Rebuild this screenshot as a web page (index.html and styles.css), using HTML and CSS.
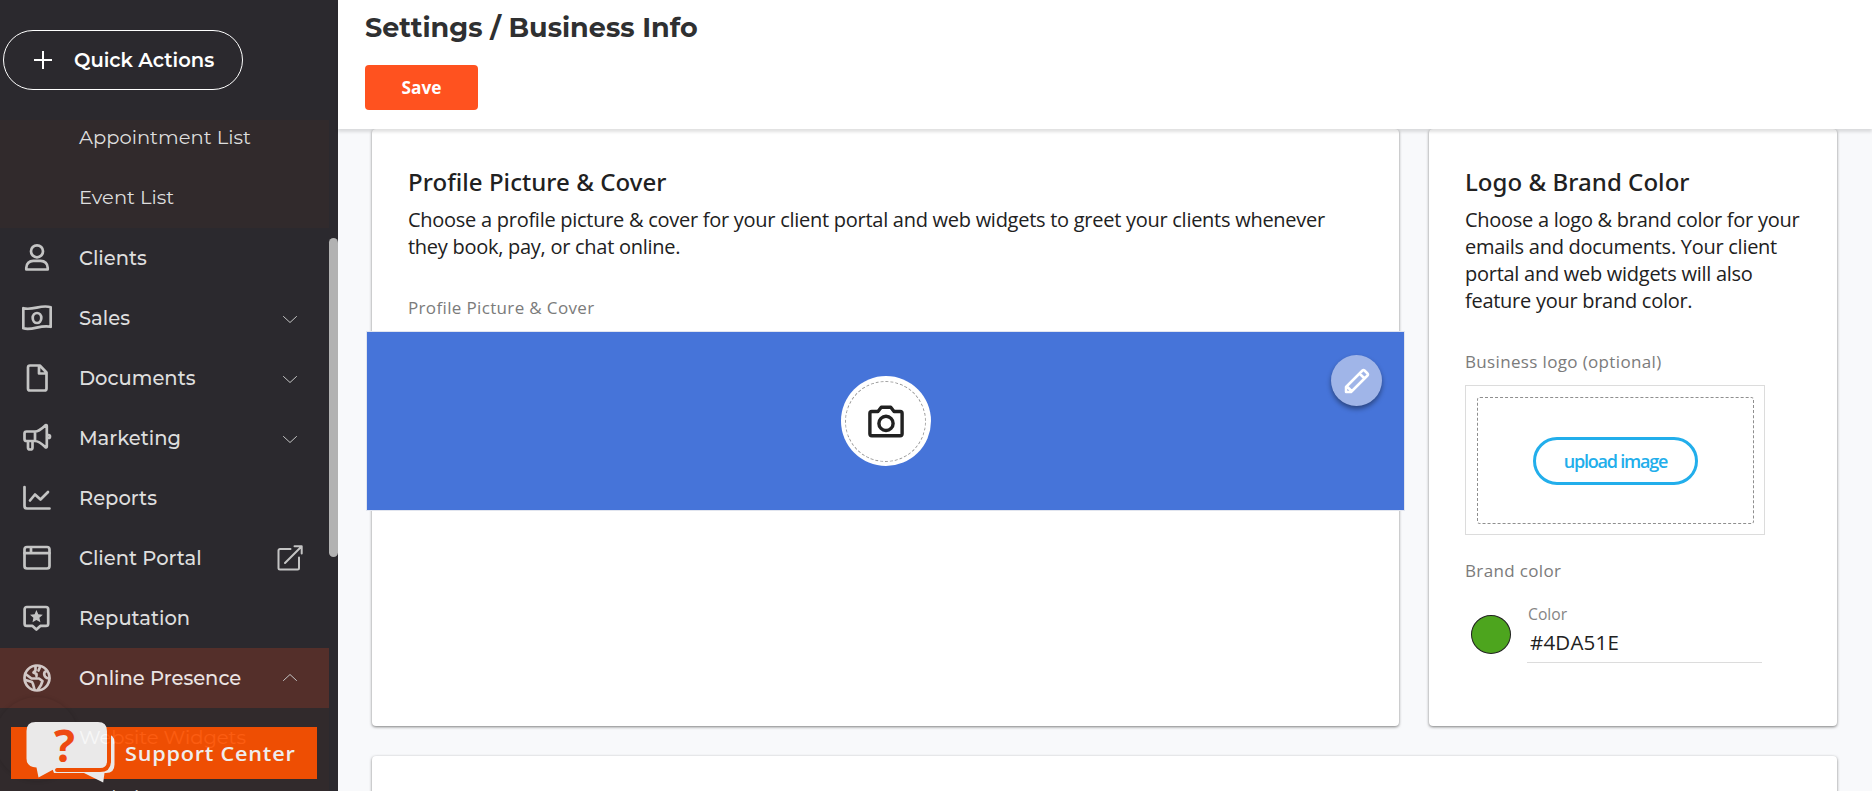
FILE: index.html
```
<!DOCTYPE html>
<html lang="en">
<head>
    <meta charset="UTF-8">
    <meta name="viewport" content="width=device-width, initial-scale=1.0">
    <title>Settings / Business Info</title>
    <link rel="stylesheet" href="styles.css">
</head>
<body>
    <aside class="sidebar">
        <button class="quick-actions">
            <svg class="plus" viewBox="0 0 18 18"><path d="M9 0v18M0 9h18"/></svg>
            <span>Quick Actions</span>
        </button>
        <div class="nav-scroll">
            <nav class="nav">
                <div class="submenu submenu-top">
                    <a class="sub-item">Appointment List</a>
                    <a class="sub-item">Event List</a>
                </div>
                <a class="nav-item">
                    <svg class="icon" viewBox="0 0 30 30"><circle cx="15" cy="8.3" r="6"/><path d="M4.300 26.500v-1.700c0-4 3-7 7-7h7.400c4 0 7 3 7 7v1.700z"/></svg>
                    <span>Clients</span>
                </a>
                <a class="nav-item">
                    <svg class="icon" viewBox="0 0 30 30"><path d="M1.300 5.200c9.500 2.700 18-4.200 27.400-.9v19.500c-10-2.500-18 4-27.400 1.500z"/><ellipse cx="15" cy="15" rx="4.300" ry="5"/></svg>
                    <span>Sales</span>
                    <svg class="chevron" viewBox="0 0 14 8"><path d="M.5.5 7 6.500 13.500.5"/></svg>
                </a>
                <a class="nav-item">
                    <svg class="icon" viewBox="0 0 30 30"><path d="M17.800 2.500H8c-1.200 0-2 .8-2 2v21c0 1.200.8 2 2 2h14.500c1.200 0 2-.8 2-2V9.500zM17 2.500v8h7.500"/></svg>
                    <span>Documents</span>
                    <svg class="chevron" viewBox="0 0 14 8"><path d="M.5.5 7 6.500 13.500.5"/></svg>
                </a>
                <a class="nav-item">
                    <svg class="icon" viewBox="0 0 30 30"><path d="M13 8.500H4.500a2 2 0 0 0-2 2v5.500a2 2 0 0 0 2 2H13M13 8.500c4 0 7.500-3.500 10.500-6.300.7-.4 1.300 0 1.300.8v20.500c0 .8-.7 1.200-1.300.8C20.500 21.500 17 18 13 18zM6 18v6.500a2 2 0 0 0 2 2h.5a2 2 0 0 0 2-2V18M25 12h1.500a1.500 1.500 0 0 1 0 3H25"/></svg>
                    <span>Marketing</span>
                    <svg class="chevron" viewBox="0 0 14 8"><path d="M.5.5 7 6.500 13.500.5"/></svg>
                </a>
                <a class="nav-item">
                    <svg class="icon" viewBox="0 0 30 30"><path d="M2.500 4v19c0 1.500 1 2.500 2.500 2.500h22.500M8 17.500l5-6 5.500 5L26 9"/></svg>
                    <span>Reports</span>
                </a>
                <a class="nav-item">
                    <svg class="icon" viewBox="0 0 30 30"><rect x="2.500" y="4" width="25" height="21.500" rx="2.500"/><path d="M2.500 10.200h25M9 4.500v5"/></svg>
                    <span>Client Portal</span>
                    <svg class="external" viewBox="0 0 26 26"><path d="M13.500 4H3a1.500 1.500 0 0 0-1.500 1.500V23A1.500 1.500 0 0 0 3 24.500h17.500A1.500 1.500 0 0 0 22 23V12.500M8 18 24.500 1.500M17.500 1.300h7.200v7.200"/></svg>
                </a>
                <a class="nav-item">
                    <svg class="icon" viewBox="0 0 30 30"><path d="M4.800 4H24c1.300 0 2.200.9 2.200 2.200v14.500c0 1.300-.9 2.200-2.200 2.200h-5.700l-3.900 3.600-3.900-3.600H4.800c-1.300 0-2.200-.9-2.200-2.200V6.200C2.600 4.900 3.500 4 4.800 4z"/><path class="solid" d="m14.400 7 1.900 4.200 4.500.5-3.400 3.100 1 4.500-4-2.300-3.900 2.300.9-4.500-3.400-3.100 4.600-.5z"/></svg>
                    <span>Reputation</span>
                </a>
                <a class="nav-item active">
                    <svg class="icon" viewBox="0 0 30 30"><circle cx="15" cy="15" r="12.500"/><path d="M13.500 3v4.500l-2 2 3 1.500v2M3.500 11l6 4.500h7.500l3.500 2.500-1.500 4-3 4.500M3.500 17l6.500 2 1 2 1.500 5.500M25 8c-4 .5-3.500 5 0 7l2 .5M18 4l-1.500 3.500"/></svg>
                    <span>Online Presence</span>
                    <svg class="chevron" viewBox="0 0 14 8"><path d="M.5 6.500 7 .5l6.500 6"/></svg>
                </a>
                <div class="submenu">
                    <a class="sub-item">Website Widgets</a>
                    <a class="sub-item">Website</a>
                </div>
            </nav>
            <div class="scrollbar"></div>
        </div>
        <div class="support-halo"></div>
        <div class="support">
            <svg class="support-bubble" viewBox="0 0 90 64">
                <path d="M12 13h68q8.500 0 8.500 8.500v22q0 8.500-8.500 8.500h-1.500l-1.300 9.500L58 52H28z"/>
                <path class="bubble-gap" d="M83 8v32q0 9-9 9H31"/>
                <path d="M9.500 1h62.500q9 0 9 9v27.500q0 9-9 9H31L12.500 56.500 10.500 46.500Q.5 46 .5 37.500V10q0-9 9-9z"/>
                <text x="28" y="41">?</text>
            </svg>
            <span class="support-label">Support Center</span>
        </div>
    </aside>
    <main class="main">
        <header class="header">
            <h1>Settings / Business Info</h1>
            <button class="save">Save</button>
        </header>
        <div class="content">
            <section class="card">
                <h2>Profile Picture &amp; Cover</h2>
                <p class="desc">Choose a profile picture &amp; cover for your client portal and web widgets to greet your clients whenever they book, pay, or chat online.</p>
                <div class="label">Profile Picture &amp; Cover</div>
                <div class="cover">
                    <button class="photo">
                        <span class="photo-ring">
                            <svg viewBox="0 0 38 34"><path d="M4 6.500h6.500L14 2h10l3.500 4.500H34q2 0 2 2V30q0 2-2 2H4q-2 0-2-2V8.500q0-2 2-2z"/><circle cx="19" cy="19" r="7.500"/></svg>
                        </span>
                    </button>
                    <button class="edit">
                        <svg viewBox="0 0 26 26"><path d="M2 24v-5L18.500 2.500q1-1 2 0l3 3q1 1 0 2L7 24zM15.500 5.500l5 5M3 18.500 7.500 23"/></svg>
                    </button>
                </div>
            </section>
            <section class="card">
                <h2>Logo &amp; Brand Color</h2>
                <p class="desc">Choose a logo &amp; brand color for your emails and documents. Your client portal and web widgets will also feature your brand color.</p>
                <div class="label">Business logo (optional)</div>
                <div class="logo-box">
                    <div class="dropzone">
                        <button class="upload">upload image</button>
                    </div>
                </div>
                <div class="label brand-label">Brand color</div>
                <div class="color-row">
                    <span class="swatch"></span>
                    <div class="color-field">
                        <label>Color</label>
                        <div class="color-value">#4DA51E</div>
                    </div>
                </div>
            </section>
            <section class="card next"></section>
        </div>
    </main>
</body>
</html>
```
FILE: styles.css
```
* {
    box-sizing: border-box;
}
body {
    margin: 0;
    display: flex;
    height: 100vh;
    overflow: hidden;
    font-family: "Open Sans", "Noto Sans", sans-serif;
    color: #212121;
    background-color: #f8f9fb;
}
button {
    font-family: inherit;
    padding: 0;
    border: none;
    cursor: pointer;
}
svg {
    fill: none;
    stroke: currentColor;
    stroke-linecap: round;
    stroke-linejoin: round;
    flex: none;
}

/* sidebar */
.sidebar {
    position: relative;
    flex: none;
    width: 338px;
    height: 100vh;
    padding-top: 30px;
    display: flex;
    flex-direction: column;
    background-color: #2b292e;
    color: #dedede;
    font-family: Montserrat, Inter, sans-serif;
}
.quick-actions {
    flex: none;
    width: 240px;
    height: 60px;
    margin-left: 3px;
    padding-left: 30px;
    display: flex;
    align-items: center;
    gap: 22px;
    border: 1px solid #fff;
    border-radius: 30px;
    background: none;
    color: #fff;
    font-family: inherit;
    font-size: 19.5px;
    font-weight: 600;
    white-space: nowrap;
}
.plus {
    width: 18px;
    height: 18px;
    stroke-width: 2;
    stroke-linecap: butt;
}
.nav-scroll {
    flex: 1;
    min-height: 0;
    margin-top: 30px;
    display: flex;
    overflow: hidden;
}
.nav {
    width: 329px;
    height: 100%;
    display: flex;
    flex-direction: column;
}
.submenu {
    flex: none;
    background-color: #312a2c;
}
.submenu-top {
    height: 108px;
    display: flex;
    flex-direction: column;
    justify-content: flex-end;
    overflow: hidden;
}
.sub-item {
    flex: none;
    height: 60px;
    padding: 0 0 2px 79px;
    display: flex;
    align-items: center;
    font-size: 19.5px;
    white-space: nowrap;
}
.nav-item {
    flex: none;
    height: 60px;
    padding: 0 32px 0 22px;
    display: flex;
    align-items: center;
    font-size: 19.5px;
    font-weight: 500;
    white-space: nowrap;
}
.nav-item span {
    padding-bottom: 1px;
}
.nav-item.active {
    background-color: #542f2a;
    color: #ebe4e3;
}
.icon {
    width: 30px;
    height: 30px;
    margin-right: 27px;
    color: #c4c4c4;
    stroke-width: 2.7;
}
.active .icon {
    color: #d2c8c6;
}
.solid {
    fill: currentColor;
    stroke: none;
}
.chevron {
    width: 14px;
    height: 8px;
    margin: 4px 0 0 auto;
    stroke-width: 1;
    color: #c4c4c4;
}
.active .chevron {
    margin-top: 0;
}
.external {
    width: 26px;
    height: 26px;
    margin-left: auto;
    margin-right: -6px;
    color: #c4c4c4;
    stroke-width: 2;
}
.scrollbar {
    width: 9px;
    height: 319px;
    margin-top: 118px;
    border-radius: 5px;
    background-color: #b2b2b2;
}

/* support button floats over the menu, slightly see-through */
.support-halo {
    position: absolute;
    left: -5px;
    top: 697px;
    width: 84px;
    height: 84px;
    border-radius: 50%;
    box-shadow: 0 0 4px rgba(0, 0, 0, 0.15);
}
.support {
    position: absolute;
    left: 11px;
    top: 727px;
    width: 306px;
    height: 52px;
    padding-left: 114px;
    display: flex;
    align-items: center;
    background-color: #ff5200;
    color: #fff;
    font-family: "Open Sans", sans-serif;
    opacity: 0.92;
}
.support-label {
    font-size: 19.5px;
    font-weight: 600;
    letter-spacing: 0.7px;
    white-space: nowrap;
    transform: scaleX(1.11);
    transform-origin: left;
}
.support-bubble {
    position: absolute;
    left: 15px;
    top: -6px;
    width: 90px;
    height: 64px;
    fill: #fafafa;
    stroke: none;
}
.support-bubble .bubble-gap {
    fill: none;
    stroke: #ff5200;
    stroke-width: 4;
}
.support-bubble text {
    fill: #ff4d10;
    font-size: 44px;
    font-weight: 700;
}

/* page */
.main {
    flex: 1;
    min-width: 0;
    height: 100vh;
    display: flex;
    flex-direction: column;
}
.header {
    position: relative;
    z-index: 1;
    flex: none;
    height: 129px;
    padding: 10px 27px 0;
    background-color: #fff;
    box-shadow: 0 3px 3px rgba(0, 0, 0, 0.12);
}
h1 {
    margin: 0 0 19px;
    font-family: Montserrat, Inter, sans-serif;
    font-size: 27px;
    font-weight: 700;
    line-height: 36px;
    color: #2f3031;
    white-space: nowrap;
}
.save {
    display: block;
    width: 113px;
    height: 45px;
    padding-bottom: 1px;
    border-radius: 4px;
    background-color: #ff521f;
    color: #fff;
    font-size: 17.3px;
    font-weight: 700;
}
.content {
    flex: 1;
    min-height: 0;
    padding: 0 35px 0 34px;
    display: grid;
    grid-template-columns: 1027px 408px;
    grid-template-rows: 597px 200px;
    gap: 30px;
    overflow: hidden;
}
.card {
    padding: 36px 36px 0;
    border-radius: 4px;
    background-color: #fff;
    box-shadow: 0 1px 3px rgba(0, 0, 0, 0.5);
}
.next {
    grid-column: span 2;
}
h2 {
    margin: 0;
    font-family: "Noto Sans", sans-serif;
    font-size: 24px;
    font-weight: 500;
    line-height: 34px;
    letter-spacing: 0.05px;
    white-space: nowrap;
}
.desc {
    margin: 7px 0 0;
    font-size: 20px;
    line-height: 27px;
    letter-spacing: -0.27px;
}
.label {
    margin-top: 36px;
    font-size: 17px;
    line-height: 24px;
    letter-spacing: 0.35px;
    color: #7b7b7b;
}
.cover {
    position: relative;
    width: 1037px;
    height: 178px;
    margin: 12px 0 0 -41px;
    display: flex;
    align-items: center;
    justify-content: center;
    background-color: #4674d9;
    box-shadow: 0 0 0 1px #e1e5ef;
}
.photo {
    width: 90px;
    height: 90px;
    display: flex;
    align-items: center;
    justify-content: center;
    border-radius: 50%;
    background-color: #fff;
    color: #212121;
}
.photo-ring {
    width: 81px;
    height: 81px;
    display: flex;
    align-items: center;
    justify-content: center;
    border: 1px dashed #9a9a9a;
    border-radius: 50%;
}
.edit {
    position: absolute;
    right: 22px;
    top: 23px;
    width: 51px;
    height: 51px;
    display: flex;
    align-items: center;
    justify-content: center;
    border-radius: 50%;
    background-color: #a0b5e8;
    color: #fff;
    box-shadow: 0 3px 5px rgba(0, 0, 0, 0.4);
}
.photo svg {
    width: 36px;
    height: 33px;
    stroke-width: 3.6;
}
.edit svg {
    width: 26px;
    height: 26px;
    stroke-width: 2.5;
}
.logo-box {
    width: 300px;
    height: 150px;
    margin-top: 11px;
    padding: 11px 10px 10px 11px;
    border: 1px solid #dcdcdc;
}
.dropzone {
    height: 100%;
    display: flex;
    align-items: center;
    justify-content: center;
    border: 1px dashed #8f8f8f;
    border-radius: 3px;
}
.upload {
    width: 165px;
    height: 48px;
    border: 3px solid #22aeeb;
    border-radius: 24px;
    background: none;
    color: #22aeeb;
    font-size: 18px;
    font-weight: 600;
    letter-spacing: -1.2px;
}
.brand-label {
    margin-top: 24px;
}
.color-row {
    margin-top: 18px;
    padding-left: 6px;
    display: flex;
}
.swatch {
    width: 40px;
    height: 39px;
    margin-top: 14px;
    border: 1px solid #212121;
    border-radius: 50%;
    background-color: #4da51e;
}
.color-field {
    width: 235px;
    height: 62px;
    margin-left: 16px;
    padding-top: 1px;
    border-bottom: 1px solid #dcdcdc;
}
.color-field label {
    display: block;
    padding-left: 1px;
    font-size: 15.7px;
    line-height: 24px;
    color: #858585;
}
.color-value {
    padding-left: 3px;
    font-size: 20.5px;
    line-height: 33px;
    letter-spacing: 0.2px;
}
```
